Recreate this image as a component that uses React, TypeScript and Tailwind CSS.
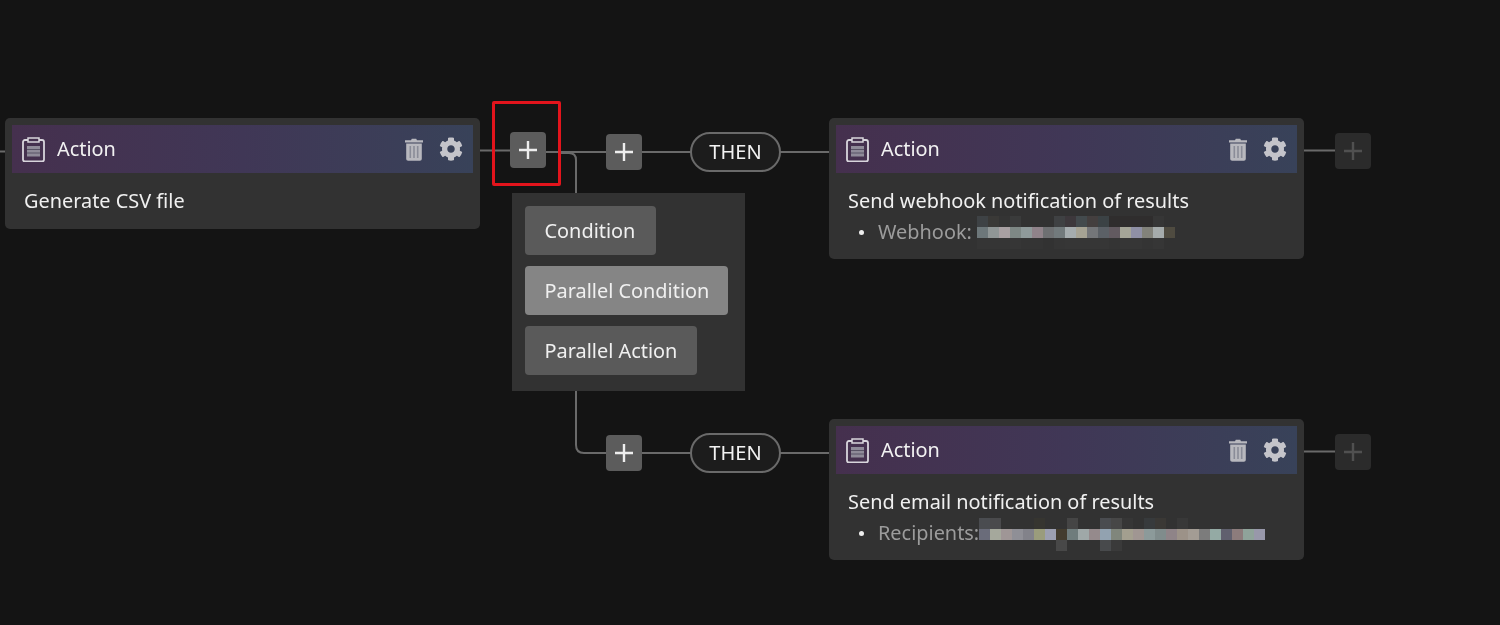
import { FaCog } from 'react-icons/fa';

// ─── Pixelated (redacted) text: rows of flat colour cells ───
type Cell = string;

const BASE = 'transparent';

const webhookBlur: Cell[][] = [
  ['#3e4245', '#3a3937', '#343434', '#3a3b3b', BASE, BASE, BASE, '#3f4143', '#3d383c', '#434a4d', '#443f3f', '#3b4245', '#2f2d2d', '#2f2d2d', '#2f2d2d', '#2f2d2d', '#363636', BASE],
  ['#6d777a', '#909696', '#a8a0a2', '#7e8885', '#8f9a9a', '#90838a', '#6e7072', '#727a7c', '#a5acae', '#a6a394', '#747679', '#5b6066', '#625a60', '#a5a598', '#8f90a5', '#82827a', '#a5abab', '#4f4b40'],
  ['#353535', '#353535', '#353535', '#363636', '#343434', '#343434', BASE, '#353535', '#363636', '#363636', '#363636', '#363636', '#343434', '#363636', '#363636', '#343434', '#363636', BASE],
];

const recipientsBlur: Cell[][] = [
  ['#4a4c50', '#4a4a4c', BASE, BASE, BASE, '#363530', BASE, BASE, '#454545', BASE, BASE, '#4a4c50', '#474747', '#363636', BASE, '#373a3c', '#3a3835', BASE, '#383838', BASE, BASE, BASE, BASE, BASE, BASE, BASE],
  ['#6a6c7a', '#a5a89c', '#9f9696', '#8f8f96', '#82828a', '#9a9c7c', '#9c9fb0', '#433c2e', '#6f7c7c', '#9fa8a8', '#958a8c', '#92a2b0', '#80867c', '#a39f8f', '#a09692', '#8c9a9a', '#808c8c', '#8f8488', '#9c9288', '#a39c94', '#7c7c7c', '#94aaa4', '#60606e', '#8c7c7c', '#8fa39a', '#9898aa'],
  [BASE, BASE, BASE, BASE, BASE, BASE, BASE, '#484848', BASE, BASE, BASE, '#484a4c', '#3a3a3a', BASE, BASE, BASE, BASE, BASE, BASE, BASE, BASE, BASE, BASE, BASE, BASE, BASE],
];

function Blur({ rows, className }: { rows: Cell[][]; className: string }) {
  return (
    <span className={`inline-flex flex-col ${className}`}>
      {rows.map((row, r) => (
        <span key={r} className="flex h-[11px]">
          {row.map((c, i) => (
            <span key={i} className="h-[11px] w-[11px]" style={{ backgroundColor: c }} />
          ))}
        </span>
      ))}
    </span>
  );
}

// ─── Icons ───
function ClipboardIcon() {
  return (
    <svg width="23" height="25" viewBox="0 0 23 25" fill="none" className="shrink-0">
      <path d="M6 3H3C1.8 3 1 3.8 1 5v17.500c0 1.200.8 2 2 2h17c1.200 0 2-.8 2-2V5c0-1.200-.8-2-2-2h-3" stroke="#d8d5dc" strokeWidth="1.800" />
      <path d="M6 1h11v4H6z" stroke="#d8d5dc" strokeWidth="1.500" />
      <rect x="5" y="9" width="13" height="10.500" fill="#8f8b99" />
      <path d="M5 12.500h13M5 16h13" stroke="#4a4558" strokeWidth="0.800" />
    </svg>
  );
}

function TrashIcon() {
  return (
    <svg width="20" height="23" viewBox="0 0 20 23" className="shrink-0">
      <path d="M7 2.200 7.800.8h4.400l.8 1.400h6v2.400H1V2.200z" fill="#b8b8be" />
      <path d="M2.200 5.600h15.600v15.200c0 1.200-.8 2-2 2H4.200c-1.200 0-2-.8-2-2z" fill="#b8b8be" />
      <path d="M6.300 8v12M10 8v12M13.700 8v12" stroke="#8a8c98" strokeWidth="1.600" />
    </svg>
  );
}

// ─── Card ───
function ActionCard({
  left,
  top,
  height,
  title,
  detail,
  blur,
  blurClass = '',
}: {
  left: string;
  top: string;
  height: string;
  title: string;
  detail?: string;
  blur?: Cell[][];
  blurClass?: string;
}) {
  return (
    <div className={`absolute ${left} ${top} ${height} w-[475px] rounded-[5px] bg-[#323232] px-[7px] pt-[7px]`}>
      <div className="flex h-[48px] items-center bg-gradient-to-r from-[#45304e] via-[#403756] to-[#384259] pl-[10px] pr-[10px]">
        <ClipboardIcon />
        <span className="ml-[12px] text-[19.9px] leading-none text-[#f2f2f2]">Action</span>
        <div className="ml-auto flex items-center gap-[15px]">
          <TrashIcon />
          <FaCog className="h-[24px] w-[24px] text-[#c4c4ca]" />
        </div>
      </div>
      <div className="pl-[12px] pt-[14px]">
        <p className="text-[19.9px] leading-[27px] text-[#f0f0f0]">{title}</p>
        {detail && blur && (
          <div className="mt-[3px] flex h-[30px] items-center pl-[11px] text-[19.9px] leading-none text-[#9c9c9c]">
            <span className="mr-[14px] h-[5px] w-[5px] rounded-full bg-[#eeeeee]" />
            <span>{detail}</span>
            <Blur rows={blur} className={blurClass} />
          </div>
        )}
      </div>
    </div>
  );
}

function PlusButton({ left, top, disabled }: { left: string; top: string; disabled?: boolean }) {
  return (
    <div
      className={`absolute ${left} ${top} flex h-[36px] w-[36px] items-center justify-center rounded-[4px] ${
        disabled ? 'bg-[#2b2b2b]' : 'bg-[#5c5c5c]'
      }`}
    >
      <svg width="20" height="20" viewBox="0 0 20 20">
        <path d="M10 1v18M1 10h18" stroke={disabled ? '#505050' : '#eeeeee'} strokeWidth="2.400" />
      </svg>
    </div>
  );
}

function ThenPill({ top }: { top: string }) {
  return (
    <div
      className={`absolute left-[690px] ${top} flex h-[40px] w-[91px] items-center justify-center rounded-full border-2 border-[#6a6a6a] bg-[#1c1c1c] text-[20px] leading-none text-[#f2f2f2]`}
    >
      THEN
    </div>
  );
}

function MenuButton({ label, active, width }: { label: string; active?: boolean; width: string }) {
  return (
    <div
      className={`flex h-[49px] ${width} items-center rounded-[4px] pl-[19.5px] text-[19.9px] leading-none text-[#f0f0f0] ${
        active ? 'bg-[#858585]' : 'bg-[#5a5a5a]'
      }`}
    >
      {label}
    </div>
  );
}

export default function App() {
  return (
    <div
      className="relative h-[625px] w-[1500px] overflow-hidden bg-[#141414] blur-[0.4px]"
      style={{ fontFamily: '"Noto Sans", "Open Sans", sans-serif' }}
    >
      {/* Connectors */}
      <svg width="1500" height="625" className="absolute inset-0" fill="none" stroke="#6a6a6a" strokeWidth="2">
        <path d="M0 151.500h6" />
        <path d="M480 150.500h31" />
        <path d="M546 152h60" />
        <path d="M560 153h9q7 0 7 7v34" />
        <path d="M642 152h50" />
        <path d="M780 152h50" />
        <path d="M1304 150.500h32" />
        <path d="M576 391v54q0 8 8 8h23" />
        <path d="M642 453h50" />
        <path d="M780 453h50" />
        <path d="M1304 451.500h32" />
      </svg>

      <ActionCard left="left-[5px]" top="top-[118px]" height="h-[111px]" title="Generate CSV file" />
      <ActionCard
        left="left-[829px]"
        top="top-[118px]"
        height="h-[141px]"
        title="Send webhook notification of results"
        detail="Webhook:"
        blur={webhookBlur}
        blurClass="ml-[5px]"
      />
      <ActionCard
        left="left-[829px]"
        top="top-[419px]"
        height="h-[141px]"
        title="Send email notification of results"
        detail="Recipients:"
        blur={recipientsBlur}
        blurClass="mt-[2px]"
      />

      <PlusButton left="left-[510px]" top="top-[132px]" />
      <PlusButton left="left-[606px]" top="top-[134px]" />
      <PlusButton left="left-[606px]" top="top-[435px]" />
      <PlusButton left="left-[1335px]" top="top-[133px]" disabled />
      <PlusButton left="left-[1335px]" top="top-[434px]" disabled />

      <ThenPill top="top-[132px]" />
      <ThenPill top="top-[433px]" />

      {/* Add-step menu */}
      <div className="absolute left-[512px] top-[193px] flex h-[198px] w-[233px] flex-col gap-[11px] bg-[#323232] pl-[13px] pt-[13px]">
        <MenuButton label="Condition" width="w-[131px]" />
        <MenuButton label="Parallel Condition" width="w-[203px]" active />
        <MenuButton label="Parallel Action" width="w-[172px]" />
      </div>

      {/* Highlight */}
      <div className="absolute left-[492px] top-[101px] h-[85px] w-[69px] rounded-[2px] border-[3px] border-[#e3141c]" />
    </div>
  );
}
